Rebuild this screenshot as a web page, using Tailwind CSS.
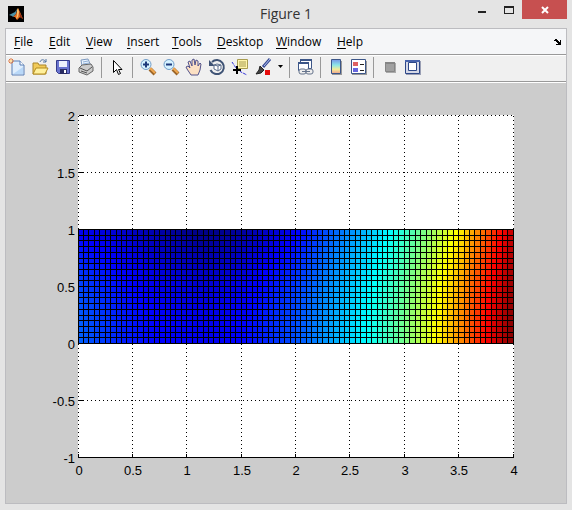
<!DOCTYPE html>
<html lang="en">
<head>
  <meta charset="UTF-8" />
  <meta name="viewport" content="width=device-width, initial-scale=1.0"/>
  <title>Figure 1</title>
  <script src="https://cdn.jsdelivr.net/npm/@tailwindcss/browser@4"></script>
</head>
<body class="bg-[#e4e4e4] font-['Open_Sans',sans-serif] text-black">
  <div class="flex h-screen flex-col">

    <!-- Title bar -->
    <header class="grid h-7 shrink-0 grid-cols-[1fr_auto_1fr] items-center">
      <svg class="ml-2 size-4" viewBox="0 0 16 16" aria-hidden="true">
        <rect width="16" height="16" fill="#000"/>
        <path d="M1 9l4-2 2-1 2-3-1 5-3 3-1-1z" fill="#4b91a5"/>
        <path d="M5 11l3-3 2-6 2 4 3 7-3-2-3 3-2-3z" fill="#e26a1f"/>
        <path d="M9 4l1-2 1 4-1 5-2 2 1-4z" fill="#f8c06a"/>
        <path d="M11 5l4 8-3-2z" fill="#8e2a12"/>
      </svg>
      <h1 class="text-sm text-[#333]">Figure 1</h1>
      <div class="mr-[5px] flex justify-end self-start">
        <button type="button" aria-label="Minimize" class="grid h-[19px] w-[28px] place-items-center">
          <svg class="size-3" viewBox="0 0 12 12"><path d="M2 7h8v2H2z" fill="#222"/></svg>
        </button>
        <button type="button" aria-label="Maximize" class="grid h-[19px] w-[26px] place-items-center">
          <svg class="size-3" viewBox="0 0 12 12"><path d="M1 2h10v8H1zM2 4v5h8V4z" fill="#222" fill-rule="evenodd"/></svg>
        </button>
        <button type="button" aria-label="Close" class="grid h-[19px] w-[45px] place-items-center bg-[#c75050]">
          <svg class="size-3" viewBox="0 0 12 12"><path d="M3 3l6 6M9 3l-6 6" stroke="#fff" stroke-width="2"/></svg>
        </button>
      </div>
    </header>

    <div class="mx-[5px] mb-1.5 flex min-h-0 flex-1 flex-col border border-[#bcbcc0]">

      <!-- Menus -->
      <nav class="flex h-[26px] shrink-0 items-center border-b border-[#999] bg-[#f5f6f8] pr-1 pl-2 text-xs">
        <button type="button" class="w-[35px] text-left"><u class="underline underline-offset-2">F</u>ile</button>
        <button type="button" class="w-[37px] text-left"><u class="underline underline-offset-2">E</u>dit</button>
        <button type="button" class="w-[41px] text-left"><u class="underline underline-offset-2">V</u>iew</button>
        <button type="button" class="w-[45px] text-left"><u class="underline underline-offset-2">I</u>nsert</button>
        <button type="button" class="w-[45px] text-left"><u class="underline underline-offset-2">T</u>ools</button>
        <button type="button" class="w-[59px] text-left"><u class="underline underline-offset-2">D</u>esktop</button>
        <button type="button" class="w-[61px] text-left"><u class="underline underline-offset-2">W</u>indow</button>
        <button type="button" class="text-left"><u class="underline underline-offset-2">H</u>elp</button>
        <button type="button" aria-label="Dock figure" class="ml-auto">
          <svg class="size-2" viewBox="0 0 8 8"><path d="M1 1h2v1h1v1h1v1h1V2h1v5H2V6h2V5H3V4H2V3H0V2h1z"/></svg>
        </button>
      </nav>

      <!-- Toolbar -->
      <div class="flex h-[27px] shrink-0 items-center border-t border-b border-t-white border-b-[#999] bg-[#f0f0f0] pb-[3px] pl-0.5">
        <button type="button" aria-label="New figure" class="w-[23px]">
          <svg class="size-[18px]" viewBox="0 0 18 18">
            <path d="M4 3h8l4 4v10H4z" fill="#dfeefd" stroke="#5a7eb5"/>
            <path d="M12 3v4h4" fill="#fff" stroke="#5a7eb5"/>
            <path d="M5 16l10-7v7z" fill="#b9d8f8"/>
            <path d="M3 0v6M0 3h6M1 1l4 4M5 1L1 5" stroke="#e07840"/>
            <path d="M2 2h2v2H2z" fill="#ffe0a0"/>
          </svg>
        </button>
        <button type="button" aria-label="Open" class="w-[23px]">
          <svg class="size-[18px]" viewBox="0 0 18 18">
            <path d="M2 16V5h5l1 2h7v9z" fill="#f1ca58" stroke="#a9852b"/>
            <path d="M2 16l3-6h12l-3 6z" fill="#fff09c" stroke="#b48c20"/>
            <path d="M9 4c1-3 4-3 6 0M15 1v3h-3" fill="none" stroke="#5374a2"/>
          </svg>
        </button>
        <button type="button" aria-label="Save" class="w-[23px]">
          <svg class="size-[18px]" viewBox="0 0 18 18">
            <path d="M2.500 2.500h13v13h-11l-2-2z" fill="#6a74cf" stroke="#343b8b"/>
            <path d="M5 3h8v6H5z" fill="#edf1fc"/><path d="M6 11h7v5H6z" fill="#292c62"/><path d="M10 12h2v3h-2z" fill="#fff"/>
          </svg>
        </button>
        <button type="button" aria-label="Print" class="w-[24px]">
          <svg class="size-[18px]" viewBox="0 0 18 18">
            <path d="M5 8L4 2l7-1 3 7z" fill="#eaf4ff" stroke="#7d99bf"/>
            <path d="M6 4l5-1M6 6l6-1" stroke="#8fb0d8"/>
            <path d="M2 10l3-3 9-1 2 3v4l-6 4-8-3z" fill="#ccc" stroke="#666"/>
            <path d="M3 10l7 3 5-4M4 13l6 2" fill="none" stroke="#555"/>
          </svg>
        </button>
        <span class="mr-[5px] h-[21px] w-px bg-[#999]"></span>
        <button type="button" aria-label="Edit plot" class="w-[25px]">
          <svg class="size-[18px]" viewBox="0 0 18 18"><path d="M6.500 2.500v12l3-3 2 5 2-1-2-4h3.500z" fill="#fff" stroke="#000"/></svg>
        </button>
        <span class="mr-1.5 h-[21px] w-px bg-[#999]"></span>
        <button type="button" aria-label="Zoom in" class="w-[23px]">
          <svg class="size-[18px]" viewBox="0 0 18 18">
            <path d="M11 11l5 5" stroke="#9a6428" stroke-width="4"/><path d="M11 10l5 5" stroke="#f0a850" stroke-width="2"/>
            <circle cx="7" cy="6.500" r="5" fill="#d5f2ff" stroke="#719dc9"/>
            <path d="M4 6.500h6M7 3.500v6" stroke="#1c397b" stroke-width="2"/>
          </svg>
        </button>
        <button type="button" aria-label="Zoom out" class="w-[23px]">
          <svg class="size-[18px]" viewBox="0 0 18 18">
            <path d="M11 11l5 5" stroke="#9a6428" stroke-width="4"/><path d="M11 10l5 5" stroke="#f0a850" stroke-width="2"/>
            <circle cx="7" cy="6.500" r="5" fill="#d5f2ff" stroke="#719dc9"/>
            <path d="M4 6.500h6" stroke="#1c397b" stroke-width="2"/>
          </svg>
        </button>
        <button type="button" aria-label="Pan" class="w-[23px]">
          <svg class="size-[18px]" viewBox="0 0 18 18">
            <path d="M6 17l-4-6-1-2 2-1 2 2-2-6 2-1 2 5V2l2-1 1 6 1-5 2 1v5l2-3 1 1-1 6-2 5z" fill="#fbe0c4" stroke="#52538c"/>
          </svg>
        </button>
        <button type="button" aria-label="Rotate 3D" class="w-[23px]">
          <svg class="size-[18px]" viewBox="0 0 18 18">
            <path d="M4 4a7 7 0 1 1-1.500 8" fill="none" stroke="#3f5375" stroke-width="2"/>
            <path d="M1 2v6h6z" fill="#3f5375"/>
            <path d="M6 7l3-1 4 1v4l-3 2-4-2zM6 7l4 1 3-1M10 8v5" fill="#fff" stroke="#5b6d8c"/>
          </svg>
        </button>
        <button type="button" aria-label="Data cursor" class="w-[24px]">
          <svg class="size-[18px]" viewBox="0 0 18 18">
            <path d="M6.500 1.500h10v9h-10z" fill="#fff5ac" stroke="#a89c50"/><path d="M8 4h7M8 6h7M8 8h7" stroke="#a89c50"/>
            <path d="M1 4l4 6 5 4 6 3" fill="none" stroke="#3232d8" stroke-dasharray="3 1"/>
            <path d="M6 8v8M2 12h8" stroke="#000" stroke-width="2"/>
          </svg>
        </button>
        <button type="button" aria-label="Brush data" class="w-[23px]">
          <svg class="size-[18px]" viewBox="0 0 18 18">
            <path d="M15 1L8 9" stroke="#384c94" stroke-width="3"/><path d="M15 1L9 8" stroke="#b3c1f0"/>
            <path d="M5 8l4 4-3 3-5 1 3-4z" fill="#444" stroke="#222"/>
            <path d="M10 12h5v5h-5z" fill="#e50c0c"/>
          </svg>
        </button>
        <button type="button" aria-label="Brush options" class="w-[11px]">
          <svg class="h-1 w-[5px]" viewBox="0 0 5 4"><path d="M0 0h5L2.500 3z"/></svg>
        </button>
        <span class="mr-1.5 h-[21px] w-px bg-[#999]"></span>
        <button type="button" aria-label="Link plot" class="w-[24px]">
          <svg class="size-[18px]" viewBox="0 0 18 18">
            <path d="M4.500 1.500h11v9h-11z" fill="#fff" stroke="#3c5688"/><path d="M4 1h12v2H4z" fill="#3c5688"/>
            <path d="M2.500 4.500h10v8h-10z" fill="#fff" stroke="#3c5688"/><path d="M2 4h11v2H2z" fill="#3c5688"/>
            <rect x="3" y="11" width="7" height="5" rx="2" fill="#eee" stroke="#65738b"/><rect x="10" y="11" width="7" height="5" rx="2" fill="#eee" stroke="#65738b"/><path d="M6 13.500h8" stroke="#65738b"/>
          </svg>
        </button>
        <span class="mr-1.5 h-[21px] w-px bg-[#999]"></span>
        <button type="button" aria-label="Insert colorbar" class="w-[23px]">
          <svg class="size-[18px]" viewBox="0 0 18 18">
            <defs>
              <linearGradient id="bar" x1="0" y1="0" x2="0" y2="1">
                <stop offset="0" stop-color="#7896e8"/><stop offset=".4" stop-color="#8ce7e8"/><stop offset=".7" stop-color="#f4ed98"/><stop offset="1" stop-color="#f0a38e"/>
              </linearGradient>
            </defs>
            <path d="M5 3h10v14H5z" fill="#999"/><path d="M4.500 1.500h9v14h-9z" fill="url(#bar)" stroke="#3c5688"/>
          </svg>
        </button>
        <button type="button" aria-label="Insert legend" class="w-[23px]">
          <svg class="size-[18px]" viewBox="0 0 18 18">
            <path d="M2 3h15v14H2z" fill="#999"/><path d="M1.500 1.500h14v14h-14z" fill="#fff" stroke="#3c5688"/>
            <path d="M3 4h5v4H3z" fill="#df6262"/><path d="M3 10h5v4H3z" fill="#6767df"/><path d="M10 6.500h4M10 12.500h4" stroke="#222"/>
          </svg>
        </button>
        <span class="mr-[7px] h-[21px] w-px bg-[#999]"></span>
        <button type="button" aria-label="Hide plot tools" class="w-[23px]">
          <svg class="size-[18px]" viewBox="0 0 18 18"><path d="M5 5h10v10H5z" fill="#aaa"/><path d="M4.500 4.500h9v9h-9z" fill="#a0a0a0" stroke="#858585"/><path d="M4 4h10v2H4z" fill="#858585"/></svg>
        </button>
        <button type="button" aria-label="Show plot tools" class="w-[23px]">
          <svg class="size-[18px]" viewBox="0 0 18 18">
            <path d="M2 3h15v14H2z" fill="#9a9fb4"/><path d="M1.500 2.500h14v13h-14z" fill="#d5d8e6" stroke="#2d4788"/>
            <path d="M1 2h15v2H1z" fill="#4662ab"/><path d="M4.500 4.500h8v8h-8z" fill="#fff" stroke="#2d4788"/>
          </svg>
        </button>
      </div>

      <!-- Figure -->
      <main class="min-h-0 flex-1 border-t border-white bg-[#ccc]">
        <svg id="axes" class="size-full font-['Liberation_Sans',sans-serif] text-[13px]" viewBox="6 83 560 420" role="img" aria-label="Surface plot" shape-rendering="crispEdges"></svg>
      </main>
    </div>
  </div>

  <script>
    const left = 78, right = 513, top0 = 115, bottom = 457;
    const cols = 80, rows = 20;

    // Values along the upper and lower edge of the surface: [x, value]
    const upper = [[0, .11], [.4, .075], [.8, .03], [1.15, 0], [1.5, .025], [2, .115], [2.5, .26], [2.88, .375], [3.2, .5], [3.5, .63], [3.8, .81], [4, .94]];
    const lower = [[0, .22], [.4, .155], [.8, .122], [1.2, .11], [1.5, .125], [2, .2], [2.5, .33], [2.7, .39], [3, .49], [3.28, .62], [3.5, .73], [3.8, .9], [4, 1]];

    const axes = document.getElementById('axes');
    const px = x => Math.floor(left + x * (right - left) / 4);
    const py = y => Math.round(bottom - (y + 1) * (bottom - top0) / 3);

    function interpolate(points, x) {
      const i = Math.max(1, points.findIndex(p => p[0] >= x));
      const [x0, v0] = points[i - 1];
      const [x1, v1] = points[i];
      return v0 + (v1 - v0) * (x - x0) / (x1 - x0);
    }

    function jet(v) {
      const channel = c => Math.round(255 * Math.min(1, Math.max(0, 1.5 - Math.abs(4 * v - c))));
      return `rgb(${channel(3)},${channel(2)},${channel(1)})`;
    }

    const line = (x1, y1, x2, y2, extra = '') =>
      `<path d="M${x1 + .5} ${y1 + .5}L${x2 + .5} ${y2 + .5}" stroke="#000" fill="none" ${extra}/>`;
    const box = (x, y, w, h, fill) => `<rect x="${x}" y="${y}" width="${w}" height="${h}" fill="${fill}"/>`;

    let out = box(left, top0, right - left + 1, bottom - top0, '#fff');

    // Grid, ticks and labels
    for (let x = 0; x <= 4; x += .5) {
      out += line(px(x), top0, px(x), bottom, 'stroke-dasharray="1 3"');
      out += line(px(x), bottom - 4, px(x), bottom);
      out += `<text x="${px(x) + 1}" y="475" text-anchor="middle">${x}</text>`;
    }
    for (let y = -1; y <= 2; y += .5) {
      out += line(left, py(y), right, py(y), 'stroke-dasharray="1 3"');
      out += line(left, py(y), left + 4, py(y));
      out += `<text x="75" y="${py(y) + 6}" text-anchor="end">${y}</text>`;
    }
    out += line(left, bottom, right, bottom);

    // Surface: black backing shows through as the mesh lines
    out += box(left, py(1), right - left + 1, py(0) - py(1) + 1, '#000');
    for (let r = 0; r < rows; r++) {
      const t = (r + .5) / rows;
      const ease = 1 - (1 - t) * (1 - t);
      for (let c = 0; c < cols; c++) {
        const x = (c + .5) * 4 / cols;
        const v = interpolate(upper, x) * (1 - ease) + interpolate(lower, x) * ease;
        const x0 = px(c * 4 / cols), x1 = px((c + 1) * 4 / cols);
        const y0 = py(1 - r / rows), y1 = py(1 - (r + 1) / rows);
        out += box(x0 + 1, y0 + 1, x1 - x0 - 1, y1 - y0 - 1, jet(v));
      }
    }
    axes.innerHTML = out;
  </script>
</body>
</html>
